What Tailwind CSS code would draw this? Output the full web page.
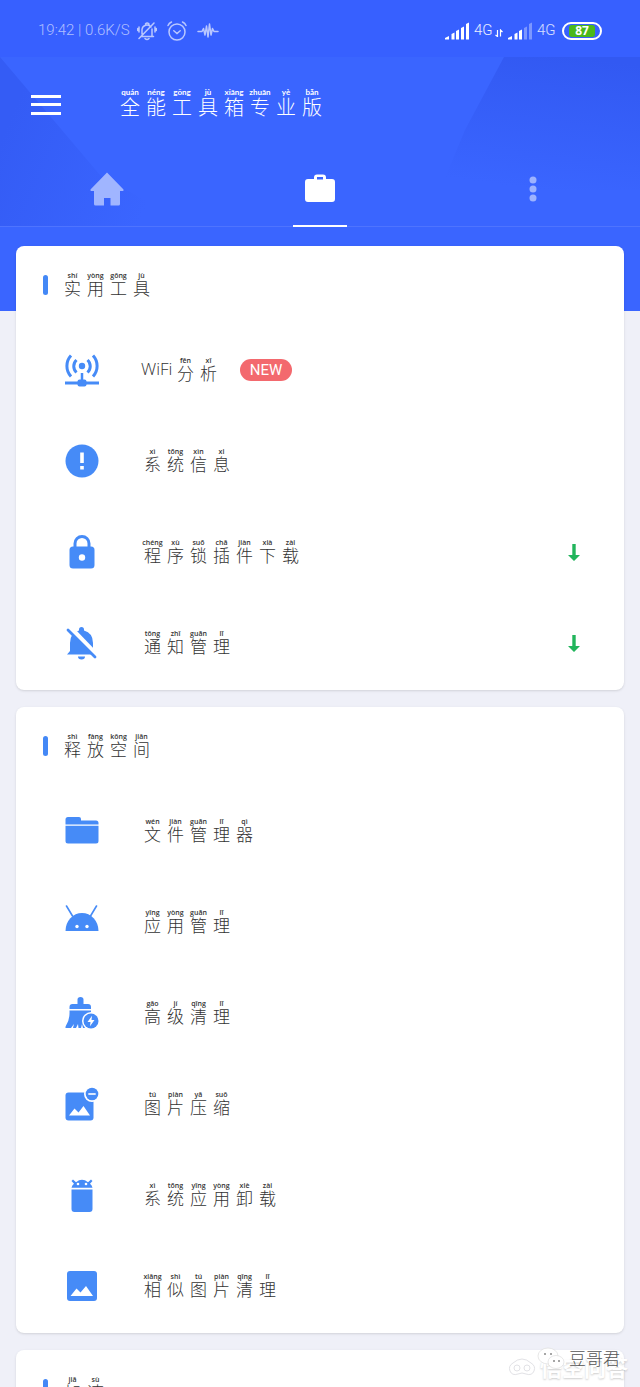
<!DOCTYPE html>
<html lang="zh-CN">
<head>
<meta charset="utf-8">
<meta name="viewport" content="width=device-width, initial-scale=1">
<title>全能工具箱专业版</title>
<script src="https://cdn.jsdelivr.net/npm/@tailwindcss/browser@4"></script>
</head>
<body class="relative h-screen overflow-hidden bg-[#eff0f8] font-['Open_Sans','Noto_Sans_CJK_SC',sans-serif] font-light text-[#333]">

<header class="relative h-[311px] bg-[#3a65ff] text-white">
  <svg class="absolute inset-0 h-full w-full" viewBox="0 0 640 311" preserveAspectRatio="none" aria-hidden="true">
    <defs>
      <linearGradient id="ga" x1="0.7" y1="0" x2="0.5" y2="1"><stop offset="0" stop-color="#3259f2"/><stop offset="1" stop-color="#3a65ff"/></linearGradient>
      <linearGradient id="gb" x1="0" y1="0.5" x2="0.8" y2="0.8"><stop offset="0" stop-color="#345cf5"/><stop offset="1" stop-color="#3a65ff"/></linearGradient>
    </defs>
    <path d="M0 57L100 175L190 226H0Z" fill="url(#gb)"/>
    <path d="M504 57H640V190H440L465 130Z" fill="url(#ga)"/>
    <path d="M0 0H640V57H0Z" fill="#3760ff"/>
  </svg>

  <div class="relative flex h-[57px] items-center pt-1 pr-[38px] pl-[38px]">
    <span class="w-[99px] whitespace-nowrap font-['Roboto',sans-serif] text-[15px] text-white/60">19:42 | 0.6K/S</span>
    <div class="flex items-center gap-[10px] text-white/65">
      <svg class="h-5 w-5" viewBox="0 0 20 20" fill="none" stroke="currentColor" stroke-width="1.5" stroke-linecap="round" aria-hidden="true"><path d="M4 15.500H16.500M5 13V8.500A5 5 0 0 1 14 6M15 8V15M8 17.500Q10 19.500 12 17.500M8.500 3Q10 1 12 3M2 17.500L17 2M2 6V11M18 6V11M.7 7.500V9.500M19.300 7.500V9.500"/></svg>
      <svg class="h-5 w-5" viewBox="0 0 20 20" fill="none" stroke="currentColor" stroke-width="1.500" stroke-linecap="round" aria-hidden="true"><circle cx="10" cy="11" r="8"/><path d="M6.800 9.800L10 12.500L13.200 9.800M1 4.500Q2 2 4.500 1M19 4.500Q18 2 15.500 1"/></svg>
      <svg class="h-5 w-[22px]" viewBox="0 0 22 20" fill="none" stroke="currentColor" stroke-width="1.500" stroke-linejoin="round" stroke-linecap="round" aria-hidden="true"><path d="M1 10.500H5L6.500 7.500L8 14L9.500 5L11 16L12.500 3L14 14L15.500 7.500L17 10.500H21"/></svg>
    </div>
    <div class="ml-auto flex items-center gap-[5px]">
      <svg class="h-[18px] w-6" viewBox="0 0 24 18" fill="#fff" aria-hidden="true"><path d="M0 17.500V16L4 14V17.500ZM6.500 12L9.500 10.500V17.500H6.500ZM11 9L14 7.500V17.500H11ZM16 6L19 4.500V17.500H16ZM21 2L24 .5V17.500H21Z"/></svg>
      <span class="w-5 font-['Roboto',sans-serif] text-[15px] text-white/90">4G</span>
      <svg class="mt-1 -ml-1 h-2 w-2" viewBox="0 0 8 8" stroke="#fff" stroke-width="1.200" fill="none" aria-hidden="true"><path d="M2.500 1V7.500L.5 6M5.500 7.500V1L7.500 3"/></svg>
      <svg class="h-[18px] w-6" viewBox="0 0 24 18" fill="#fff" aria-hidden="true"><path d="M0 17.500V16L4 14V17.500ZM6.500 12L9.500 10.500V17.500H6.500ZM11 9L14 7.500V17.500H11Z"/><path opacity=".35" d="M16 6L19 4.500V17.500H16ZM21 2L24 .5V17.500H21Z"/></svg>
      <span class="w-5 font-['Roboto',sans-serif] text-[15px] text-white/80">4G</span>
      <span class="flex h-[18px] w-10 rounded-full border-2 border-white px-[5px] py-px"><span class="flex flex-1 items-center justify-center rounded-[3px] bg-[#4bb81a] text-xs leading-3 font-bold">87</span></span>
    </div>
  </div>

  <div class="relative flex h-[95px] items-center pl-[31px]">
    <button type="button" aria-label="菜单" class="flex h-5 w-[30px] flex-col justify-between"><span class="h-[3px] w-full bg-white"></span><span class="h-[3px] w-full bg-white"></span><span class="h-[3px] w-full bg-white"></span></button>
    <h1 class="ml-14 flex pb-1 text-xl leading-[22px] font-light [&>ruby]:flex [&>ruby]:w-[26px] [&>ruby]:flex-col-reverse [&>ruby]:items-center [&_rt]:font-['Lato',sans-serif] [&_rt]:text-[8px] [&_rt]:leading-[10px] [&_rt]:font-bold [&_rt]:whitespace-nowrap"><ruby>全<rt>quán</rt></ruby><ruby>能<rt>néng</rt></ruby><ruby>工<rt>gōng</rt></ruby><ruby>具<rt>jù</rt></ruby><ruby>箱<rt>xiāng</rt></ruby><ruby>专<rt>zhuān</rt></ruby><ruby>业<rt>yè</rt></ruby><ruby>版<rt>bǎn</rt></ruby></h1>
  </div>

  <nav class="relative grid h-[75px] grid-cols-3 border-b border-white/10">
    <button type="button" aria-label="首页" class="flex items-center justify-center text-[#a0b5ff]"><svg class="h-[34px] w-[34px]" viewBox="0 0 34 34" fill="currentColor" aria-hidden="true"><path d="M17 .5L33.500 17.500Q34 19 32.500 19H30V32Q30 33.500 28.500 33.500H20.500V26H14V33.500H5.500Q4 33.500 4 32V19H1.500Q0 19 .5 17.500Z"/></svg></button>
    <button type="button" aria-label="工具" aria-current="page" class="relative flex items-center justify-center"><svg class="h-[30px] w-[30px]" viewBox="0 0 30 30" fill="#fff" fill-rule="evenodd" aria-hidden="true"><path d="M3 5H9V3.500Q9 .5 12 .5H18Q21 .5 21 3.500V5H27Q30 5 30 8V25Q30 28 27 28H3Q0 28 0 25V8Q0 5 3 5ZM12 3V5.500H18V3Z"/></svg><span class="absolute -bottom-px h-[2px] w-[54px] bg-white"></span></button>
    <button type="button" aria-label="更多" class="flex items-center justify-center text-[#9db3ff]"><svg class="h-7 w-2" viewBox="0 0 8 28" fill="currentColor" aria-hidden="true"><circle cx="4" cy="5" r="3.500"/><circle cx="4" cy="14" r="3.500"/><circle cx="4" cy="23" r="3.500"/></svg></button>
  </nav>
</header>

<main class="relative -mt-[65px] flex flex-col gap-[17px] px-4">
  <section class="rounded-lg bg-white pb-px shadow-sm">
    <h2 class="flex h-[79px] items-center gap-[13px] pb-px pl-[27px] text-[17px] leading-4 font-light"><span class="h-5 w-[5px] rounded-full bg-[#4488f6]"></span><span class="flex pb-0.5 [&>ruby]:flex [&>ruby]:w-[23px] [&>ruby]:flex-col-reverse [&>ruby]:items-center [&_rt]:text-[7px] [&_rt]:leading-[10px] [&_rt]:font-semibold [&_rt]:whitespace-nowrap"><ruby>实<rt>shí</rt></ruby><ruby>用<rt>yòng</rt></ruby><ruby>工<rt>gōng</rt></ruby><ruby>具<rt>jù</rt></ruby></span></h2>
    <ul class="text-[17px] leading-4 [&_a]:flex [&_a]:h-[91px] [&_a]:items-center [&_a]:pr-11 [&_a]:pb-px [&_a]:pl-[49px] [&_ruby]:flex [&_ruby]:w-[23px] [&_ruby]:flex-col-reverse [&_ruby]:items-center [&_rt]:text-[7px] [&_rt]:leading-[10px] [&_rt]:font-semibold [&_rt]:whitespace-nowrap">
      <li><a href="#wifi">
        <svg class="h-[34px] w-[34px] text-[#468bf7]" viewBox="0 0 34 34" fill="none" stroke="currentColor" stroke-width="3" aria-hidden="true"><circle cx="17" cy="13" r="3.200" fill="currentColor" stroke="none"/><path d="M11.500 7A8.500 8.500 0 0 0 11.500 19.500M22.500 7A8.500 8.500 0 0 1 22.500 19.500M6 2.500A15.500 15.500 0 0 0 6 23.500M28 2.500A15.500 15.500 0 0 1 28 23.500"/><path d="M17 20V28" stroke-width="2.500"/><path d="M0 30H34"/><rect x="12.500" y="26.500" width="9" height="7" rx="2" fill="currentColor" stroke="none"/></svg>
        <span class="ml-[42px] flex items-center pb-0.5"><span class="w-[33px] text-[17px]">WiFi</span><ruby>分<rt>fēn</rt></ruby><ruby>析<rt>xī</rt></ruby></span>
        <span class="ml-5 flex h-[22px] w-[52px] items-center justify-center rounded-full bg-[#f3696e] font-['Roboto',sans-serif] text-[15px] font-normal text-white">NEW</span>
      </a></li>
      <li><a href="#system">
        <svg class="h-[34px] w-[34px] text-[#468bf7]" viewBox="0 0 34 34" aria-hidden="true"><circle cx="17" cy="17" r="16.500" fill="currentColor"/><path d="M15.200 8.500H18.800V19H15.200ZM15.200 22H18.800V25.500H15.200Z" fill="#fff"/></svg>
        <span class="ml-[42px] flex pb-0.5"><ruby>系<rt>xì</rt></ruby><ruby>统<rt>tǒng</rt></ruby><ruby>信<rt>xìn</rt></ruby><ruby>息<rt>xi</rt></ruby></span>
      </a></li>
      <li><a href="#lock">
        <svg class="h-[34px] w-[34px] text-[#468bf7]" viewBox="0 0 34 34" aria-hidden="true"><path d="M10 14V8.500A7 7 0 0 1 24 8.500V14" fill="none" stroke="currentColor" stroke-width="3"/><rect x="4.500" y="11.500" width="25" height="22" rx="3.500" fill="currentColor"/><circle cx="17" cy="22.500" r="3.200" fill="#fff"/></svg>
        <span class="ml-[42px] flex pb-0.5"><ruby>程<rt>chéng</rt></ruby><ruby>序<rt>xù</rt></ruby><ruby>锁<rt>suǒ</rt></ruby><ruby>插<rt>chā</rt></ruby><ruby>件<rt>jiàn</rt></ruby><ruby>下<rt>xià</rt></ruby><ruby>载<rt>zài</rt></ruby></span>
        <svg class="ml-auto h-[17px] w-3" viewBox="0 0 12 17" fill="#22b55c" aria-label="下载" role="img"><path d="M4.300 0H7.700V11H12L6 17L0 11H4.300Z"/></svg>
      </a></li>
      <li><a href="#notifications">
        <svg class="h-[34px] w-[34px] text-[#468bf7]" viewBox="0 0 34 34" fill="currentColor" aria-hidden="true"><path d="M2 28.500L5 25V17Q5 7 14 4.500V3.500A2.500 2.500 0 0 1 19 3.500V4.500Q28 7 28 17V25L31 28.500Z"/><path d="M13 30.500H20Q20 33.500 16.500 33.500Q13 33.500 13 30.500Z"/><path d="M6 2.500L33 30.500" fill="none" stroke="#fff" stroke-width="5"/><path d="M3 4L30 31" fill="none" stroke="currentColor" stroke-width="2.800" stroke-linecap="round"/></svg>
        <span class="ml-[42px] flex pb-0.5"><ruby>通<rt>tōng</rt></ruby><ruby>知<rt>zhī</rt></ruby><ruby>管<rt>guǎn</rt></ruby><ruby>理<rt>lǐ</rt></ruby></span>
        <svg class="ml-auto h-[17px] w-3" viewBox="0 0 12 17" fill="#22b55c" aria-label="下载" role="img"><path d="M4.300 0H7.700V11H12L6 17L0 11H4.300Z"/></svg>
      </a></li>
    </ul>
  </section>

  <section class="rounded-lg bg-white pb-px shadow-sm">
    <h2 class="flex h-[79px] items-center gap-[13px] pb-px pl-[27px] text-[17px] leading-4 font-light"><span class="h-5 w-[5px] rounded-full bg-[#4488f6]"></span><span class="flex pb-0.5 [&>ruby]:flex [&>ruby]:w-[23px] [&>ruby]:flex-col-reverse [&>ruby]:items-center [&_rt]:text-[7px] [&_rt]:leading-[10px] [&_rt]:font-semibold [&_rt]:whitespace-nowrap"><ruby>释<rt>shì</rt></ruby><ruby>放<rt>fàng</rt></ruby><ruby>空<rt>kōng</rt></ruby><ruby>间<rt>jiān</rt></ruby></span></h2>
    <ul class="text-[17px] leading-4 [&_a]:flex [&_a]:h-[91px] [&_a]:items-center [&_a]:pr-11 [&_a]:pb-px [&_a]:pl-[49px] [&_ruby]:flex [&_ruby]:w-[23px] [&_ruby]:flex-col-reverse [&_ruby]:items-center [&_rt]:text-[7px] [&_rt]:leading-[10px] [&_rt]:font-semibold [&_rt]:whitespace-nowrap">
      <li><a href="#files">
        <svg class="h-[34px] w-[34px] text-[#468bf7]" viewBox="0 0 34 34" fill="currentColor" aria-hidden="true"><path d="M.5 10.500V5.500Q.5 3 3 3H14Q16 3 16 5V6.500H31Q33.500 6.500 33.500 9V10.500ZM.5 11.800H33.500V27Q33.500 29.500 31 29.500H3Q.5 29.500 .5 27Z"/></svg>
        <span class="ml-[42px] flex pb-0.5"><ruby>文<rt>wén</rt></ruby><ruby>件<rt>jiàn</rt></ruby><ruby>管<rt>guǎn</rt></ruby><ruby>理<rt>lǐ</rt></ruby><ruby>器<rt>qì</rt></ruby></span>
      </a></li>
      <li><a href="#apps">
        <svg class="h-[34px] w-[34px] text-[#468bf7]" viewBox="0 0 34 34" aria-hidden="true"><path d="M.5 26A16.500 18 0 0 1 33.500 26Z" fill="currentColor"/><path d="M1.500 1L7.500 11M31.500 1L25.500 11" stroke="currentColor" stroke-width="1.600" stroke-linecap="round"/><circle cx="12" cy="21.500" r="1.700" fill="#fff"/><circle cx="22" cy="21.500" r="1.700" fill="#fff"/></svg>
        <span class="ml-[42px] flex pb-0.5"><ruby>应<rt>yīng</rt></ruby><ruby>用<rt>yòng</rt></ruby><ruby>管<rt>guǎn</rt></ruby><ruby>理<rt>lǐ</rt></ruby></span>
      </a></li>
      <li><a href="#clean">
        <svg class="h-[34px] w-[34px] text-[#468bf7]" viewBox="0 0 34 34" fill="currentColor" aria-hidden="true"><path d="M12.500 8V3.500Q12.500 1 15.500 1T18.500 3.500V8H23Q26 8 26 11V13H4.500V11Q4.500 8 7.500 8ZM4.500 14.500H26V32H18L17 28L16 32H13.500L13 28L11 32H8L9 28L6 32H1Q0 32 .8 30Q5 24 4.500 14.500Z"/><circle cx="26" cy="25" r="9" fill="#fff"/><circle cx="26" cy="25" r="7.500"/><path d="M27 19.800L22.500 26H25.500L25 30.200L29.500 24H26.500Z" fill="#fff"/></svg>
        <span class="ml-[42px] flex pb-0.5"><ruby>高<rt>gāo</rt></ruby><ruby>级<rt>jí</rt></ruby><ruby>清<rt>qīng</rt></ruby><ruby>理<rt>lǐ</rt></ruby></span>
      </a></li>
      <li><a href="#compress">
        <svg class="h-[34px] w-[34px] text-[#468bf7]" viewBox="0 0 34 34" fill="currentColor" aria-hidden="true"><rect x=".5" y="5.500" width="28" height="28" rx="3"/><path d="M4 28.500L9.500 21.500L13.500 25.500L18.500 19L25 28.500Z" fill="#fff"/><circle cx="27" cy="7" r="8" fill="#fff"/><circle cx="27" cy="7" r="6.300"/><path d="M23.300 6.200H30.700V7.800H23.300Z" fill="#fff"/></svg>
        <span class="ml-[42px] flex pb-0.5"><ruby>图<rt>tú</rt></ruby><ruby>片<rt>piàn</rt></ruby><ruby>压<rt>yā</rt></ruby><ruby>缩<rt>suō</rt></ruby></span>
      </a></li>
      <li><a href="#uninstall">
        <svg class="h-[34px] w-[34px] text-[#468bf7]" viewBox="0 0 34 34" fill="currentColor" aria-hidden="true"><path d="M6.500 11.500H27.500V31Q27.500 34 24.500 34H9.500Q6.500 34 6.500 31ZM6.500 9.800Q7 7.500 9 5.800L6.500 3L8 1.500L11 4.200Q17 -.5 23 4.200L26 1.500L27.500 3L25 5.800Q27 7.500 27.500 9.800Z"/><circle cx="13" cy="6" r="1.300" fill="#fff"/><circle cx="21" cy="6" r="1.300" fill="#fff"/></svg>
        <span class="ml-[42px] flex pb-0.5"><ruby>系<rt>xì</rt></ruby><ruby>统<rt>tǒng</rt></ruby><ruby>应<rt>yīng</rt></ruby><ruby>用<rt>yòng</rt></ruby><ruby>卸<rt>xiè</rt></ruby><ruby>载<rt>zài</rt></ruby></span>
      </a></li>
      <li><a href="#similar">
        <svg class="h-[34px] w-[34px] text-[#468bf7]" viewBox="0 0 34 34" fill="currentColor" aria-hidden="true"><rect x="2" y="2" width="30" height="30" rx="3"/><path d="M5.500 27L11.500 19.500L15.500 23.500L21 17L28 27Z" fill="#fff"/></svg>
        <span class="ml-[42px] flex pb-0.5"><ruby>相<rt>xiāng</rt></ruby><ruby>似<rt>shì</rt></ruby><ruby>图<rt>tú</rt></ruby><ruby>片<rt>piàn</rt></ruby><ruby>清<rt>qīng</rt></ruby><ruby>理<rt>lǐ</rt></ruby></span>
      </a></li>
    </ul>
  </section>

  <section class="rounded-lg bg-white pb-px shadow-sm">
    <h2 class="flex h-[79px] items-center gap-[13px] pb-px pl-[27px] text-[17px] leading-4 font-light"><span class="h-5 w-[5px] rounded-full bg-[#4488f6]"></span><span class="flex pb-0.5 [&>ruby]:flex [&>ruby]:w-[23px] [&>ruby]:flex-col-reverse [&>ruby]:items-center [&_rt]:text-[7px] [&_rt]:leading-[10px] [&_rt]:font-semibold [&_rt]:whitespace-nowrap"><ruby>加<rt>jiā</rt></ruby><ruby>速<rt>sù</rt></ruby></span></h2>
  </section>
</main>

<!-- Watermarks over the page corner -->
<div class="absolute right-3 bottom-2 flex items-center gap-1 text-[22px] leading-6 font-bold text-white [text-shadow:0_1px_2px_#0003]">
  <svg class="h-5 w-7" viewBox="0 0 28 20" fill="#fff" stroke="#e2e2e6" aria-hidden="true"><path d="M5 6Q14 -2 23 6Q28 9 26 14Q24 19 18 17Q14 15 10 17Q4 19 2 14Q0 9 5 6Z"/><circle cx="9" cy="11" r="3"/><circle cx="19" cy="11" r="3"/></svg>
  <span>悟空问答</span>
</div>
<div class="absolute right-5 bottom-4 flex items-center gap-1 text-[17px] leading-5 text-[#555]">
  <svg class="h-6 w-7" viewBox="0 0 28 24" fill="#fff" stroke="#ddd" stroke-width=".7" aria-hidden="true"><ellipse cx="11" cy="9" rx="10" ry="8"/><ellipse cx="19" cy="15" rx="8" ry="6.500"/><g fill="#888" stroke="none"><circle cx="8" cy="7" r="1"/><circle cx="14" cy="7" r="1"/><circle cx="17" cy="14" r="1"/><circle cx="22" cy="14" r="1"/></g></svg>
  <span>豆哥君</span>
</div>
</body>
</html>
